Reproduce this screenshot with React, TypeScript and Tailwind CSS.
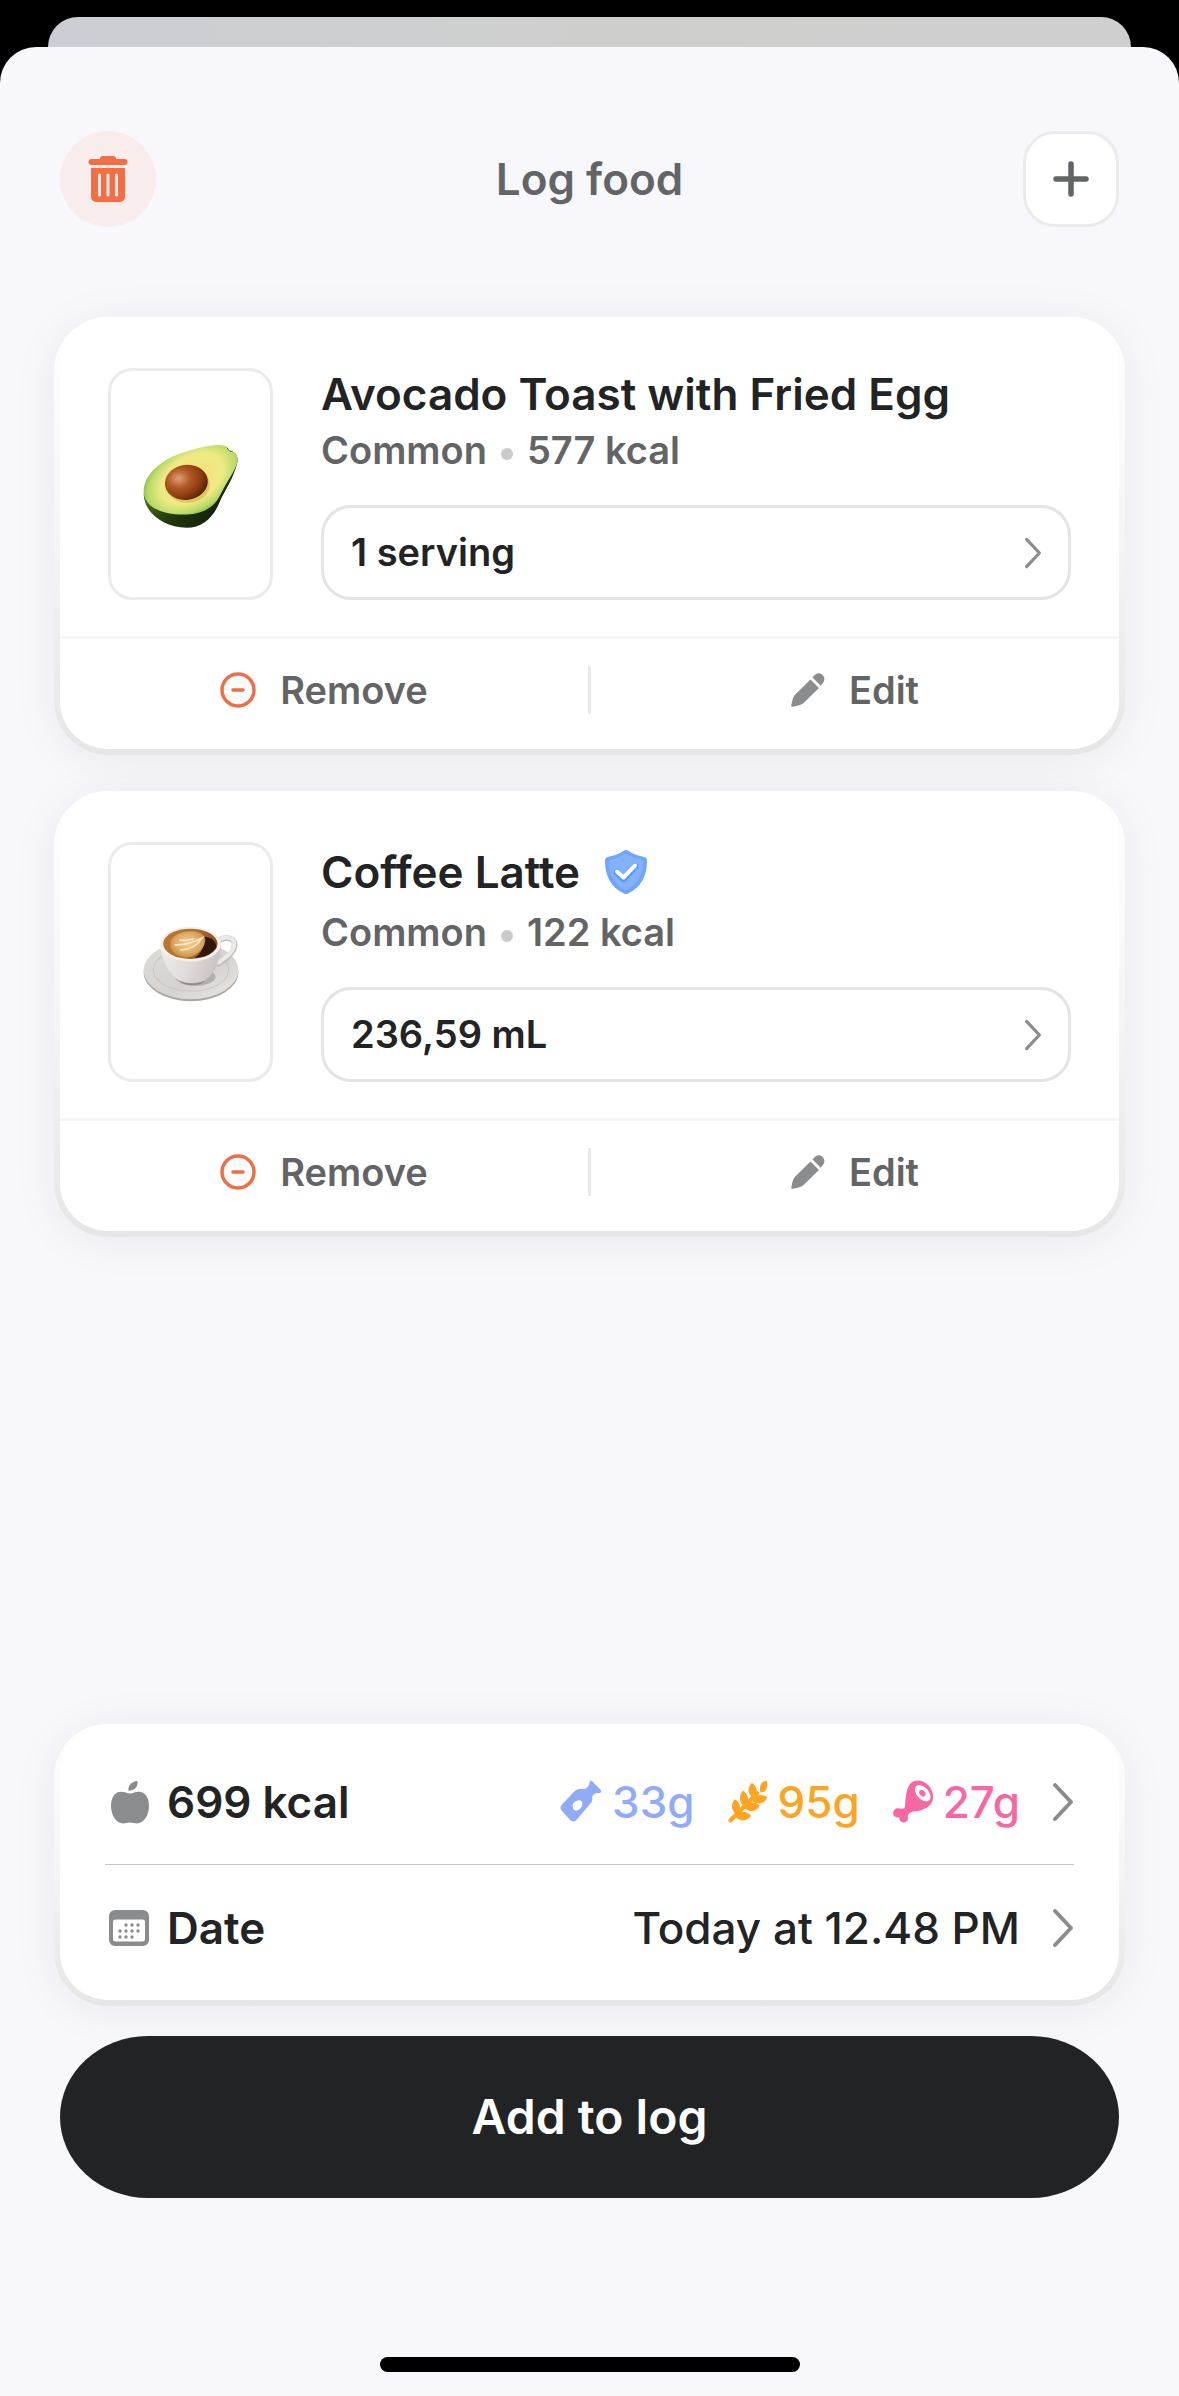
import type { ReactNode } from 'react'

type IconProps = { className?: string }

type FoodItem = {
  name: string
  source: string
  calories: string
  amount: string
  verified: boolean
  picture: ReactNode
}

function TrashIcon({ className }: IconProps) {
  return (
    <svg viewBox="0 0 40 48" className={className} fill="currentColor" aria-hidden="true">
      <path d="M12 3.500C12 2 13.200 1 14.700 1h10.600C26.800 1 28 2 28 3.500V4h8.500a3 3 0 0 1 0 6h-33a3 3 0 0 1 0-6H12z" />
      <path
        fillRule="evenodd"
        d="M3 13h34v29a5 5 0 0 1-5 5H8a5 5 0 0 1-5-5zM11.500 18.500a1.500 1.500 0 0 0-1.500 1.500v20a1.500 1.500 0 0 0 3 0V20a1.500 1.500 0 0 0-1.500-1.500zM20 18.500a1.500 1.500 0 0 0-1.500 1.500v20a1.500 1.500 0 0 0 3 0V20a1.500 1.500 0 0 0-1.500-1.500zM28.500 18.500A1.500 1.500 0 0 0 27 20v20a1.500 1.500 0 0 0 3 0V20a1.500 1.500 0 0 0-1.500-1.500z"
      />
    </svg>
  )
}

function PlusIcon({ className }: IconProps) {
  return (
    <svg viewBox="0 0 36 36" className={className} fill="none" stroke="currentColor" strokeWidth="5.500" strokeLinecap="round" aria-hidden="true">
      <path d="M18 3v30M3 18h30" />
    </svg>
  )
}

function ChevronIcon({ className }: IconProps) {
  return (
    <svg viewBox="0 0 22 40" className={className} fill="none" stroke="currentColor" strokeWidth="4" strokeLinecap="round" strokeLinejoin="round" aria-hidden="true">
      <path d="M3 3l16 17L3 37" />
    </svg>
  )
}

function MinusCircleIcon({ className }: IconProps) {
  return (
    <svg viewBox="0 0 36 36" className={className} fill="none" stroke="currentColor" strokeWidth="3.500" strokeLinecap="round" aria-hidden="true">
      <circle cx="18" cy="18" r="16" />
      <path d="M13 18h10" />
    </svg>
  )
}

function PencilIcon({ className }: IconProps) {
  return (
    <svg viewBox="0 0 34 34" className={className} fill="currentColor" aria-hidden="true">
      <path d="M19.500 6.500l8.500 8.500L12.500 30c-1.500 1.500-4 2.300-6 2.800l-4.500 1C.7 34 0 33.400.3 32.200l1-4.500c.5-2 1.200-4.500 2.700-6z" />
      <path d="M21.500 4.500l2-2.200c2.200-2.500 5.600-2.900 8.100-.4s2.300 5.900 0 8.300L29.800 12.800z" />
    </svg>
  )
}

function ShieldIcon({ className }: IconProps) {
  return (
    <svg viewBox="0 0 44 46" className={className} aria-hidden="true">
      <path d="M22 1c1 0 1.500.3 2.300.8 4 2.800 9.500 5 15 6 2.500.5 3.700 1.500 3.700 4C43 27 37 38.500 24 44.500c-1.500.7-2.500.7-4 0C7 38.500 1 27 1 11.800c0-2.500 1.200-3.500 3.700-4 5.500-1 11-3.200 15-6C20.500 1.300 21 1 22 1z" fill="#6fa6fb" />
      <path d="M22 4.500c4.500 3 10 5 15.500 6.200 1.300.3 2 .8 2 2.300C39 26 33 36 22 41.500 11 36 5 26 4.500 13c0-1.500.7-2 2-2.300C12 9.500 17.500 7.500 22 4.500z" fill="#83b2fd" />
      <path d="M13 23.500l6.500 6.500L31 17.500" fill="none" stroke="#5c97f4" strokeWidth="6.500" strokeLinecap="round" strokeLinejoin="round" />
      <path d="M13 22.500l6.500 6L31 16.500" fill="none" stroke="#fff" strokeWidth="4" strokeLinecap="round" strokeLinejoin="round" />
    </svg>
  )
}

function AppleIcon({ className }: IconProps) {
  return (
    <svg viewBox="0 0 38 44" className={className} fill="currentColor" aria-hidden="true">
      <path d="M26.500 1c1 5-2.500 9.500-9 9.800C16.500 6 20.500 1.500 26.500 1z" />
      <path d="M19 13.500c3 0 5-1.700 9-1.700 6 0 10 6 10 14 0 10-5.500 17.700-12 17.700-2.500 0-4-1-7-1s-4.500 1-7 1C5.500 43.500 0 35.800 0 25.800c0-8 4-14 10-14 4 0 6 1.700 9 1.700z" />
    </svg>
  )
}

function CalendarIcon({ className }: IconProps) {
  const dots = [
    [17, 15], [23, 15], [29, 15],
    [11, 21], [17, 21], [23, 21], [29, 21],
    [11, 27], [17, 27], [23, 27],
  ]
  return (
    <svg viewBox="0 0 40 36" className={className} fill="currentColor" aria-hidden="true">
      <path
        fillRule="evenodd"
        d="M6 0h28a6 6 0 0 1 6 6v24a6 6 0 0 1-6 6H6a6 6 0 0 1-6-6V6a6 6 0 0 1 6-6zM6.500 9.500a2.500 2.500 0 0 0-2.500 2.500v17a2.500 2.500 0 0 0 2.500 2.500h27a2.500 2.500 0 0 0 2.500-2.500V12a2.500 2.500 0 0 0-2.500-2.500z"
      />
      {dots.map(([x, y]) => (
        <circle key={`${x}-${y}`} cx={x} cy={y} r="1.700" />
      ))}
    </svg>
  )
}

function OilIcon({ className }: IconProps) {
  return (
    <svg viewBox="30 30 126 130" className={className} fill="currentColor" aria-hidden="true">
      <path
        fillRule="evenodd"
        d="M119 38c0-5 4-7 8-4l26 26c3 4 1 9-5 9-8 0-14 2-18 6-3 3-3 7-3 12 0 7-2 11-6 15l-41 48c-6 7-14 7-20 1l-25-28c-5-6-5-12 0-18l36-39c6-6 11-9 19-9h12c4 0 6-1 9-4 5-5 7-9 8-15zM84 92c-11 2-17 9-16 18 0 7 4 12 9 12 11 0 21-10 20-22-1-6-6-10-13-8z"
      />
    </svg>
  )
}

function WheatIcon({ className }: IconProps) {
  return (
    <svg viewBox="522 28 122 130" className={className} fill="currentColor" aria-hidden="true">
      <path d="M642 30c1 22 1 35-20 36-5-20 2-35 20-36z" />
      <path d="M596 36c16 10 20 30 7 48-20-11-22-32-7-48z" />
      <path d="M643 80c-8 20-28 25-45 12 8-21 28-24 45-12z" />
      <path d="M569 60c17 10 21 32 9 52-20-11-24-34-9-52z" />
      <path d="M620 106c-12 20-31 21-47 7 9-20 30-22 47-7z" />
      <path d="M544 86c18 9 22 31 11 50-20-11-25-33-11-50z" />
      <path d="M594 136c-13 19-34 18-48 3 10-21 32-19 48-3z" />
      <path d="M532 150l80-82" fill="none" stroke="currentColor" strokeWidth="13" strokeLinecap="round" />
    </svg>
  )
}

function HamIcon({ className }: IconProps) {
  return (
    <svg viewBox="1016 28 124 130" className={className} aria-hidden="true">
      <path d="M1078 33c14-7 34-4 48 11 15 16 18 39 9 54-10 15-31 24-53 25-7 1-12 3-17 10-3 5 0 9-1 14-2 8-11 12-19 8-6-3-7-8-7-14-6 1-12 0-16-5-5-8-2-19 7-22 6-2 12 0 17 1 7 0 10-5 10-13 1-28 6-60 22-69z" fill="currentColor" />
      <ellipse cx="1109" cy="68" rx="18" ry="29" transform="rotate(-42 1109 68)" fill="#fff" />
      <ellipse cx="1108" cy="68" rx="8" ry="11" transform="rotate(-42 1108 68)" fill="currentColor" />
    </svg>
  )
}

function AvocadoPicture({ className }: IconProps) {
  return (
    <svg viewBox="40 72 290 256" className={className} aria-hidden="true">
      <defs>
        <linearGradient id="skin" x1="0" y1="0.300" x2="1" y2="1">
          <stop offset="0" stopColor="#5c8a24" />
          <stop offset="0.450" stopColor="#223a0d" />
          <stop offset="1" stopColor="#0c0f0a" />
        </linearGradient>
        <radialGradient id="flesh" gradientUnits="userSpaceOnUse" cx="0" cy="0" r="1" gradientTransform="translate(188 176) rotate(-32) scale(176 112)">
          <stop offset="0" stopColor="#f3e070" />
          <stop offset="0.580" stopColor="#efea86" />
          <stop offset="0.820" stopColor="#b9da66" />
          <stop offset="1" stopColor="#76b03c" />
        </radialGradient>
        <radialGradient id="pit" cx="0.340" cy="0.360" r="0.750">
          <stop offset="0" stopColor="#dfa07c" />
          <stop offset="0.350" stopColor="#b25a28" />
          <stop offset="0.700" stopColor="#8b3a10" />
          <stop offset="1" stopColor="#4c1703" />
        </radialGradient>
      </defs>
      <path d="M42 222c0 56 60 103 130 103 46 0 78-28 98-74 18-42 42-70 55-122 3-22-6-32-24-37z" fill="url(#skin)" />
      <path d="M42 222c-2-50 36-84 78-108 46-20 92-32 134-38 20-3 36-1 42 7 3 7 6 11 13 12 14 4 20 16 16 32-6 26-34 62-52 100-18 38-54 56-100 58-66 2-122-16-131-63z" fill="url(#flesh)" />
      <path d="M294 84c5 8 9 11 15 11" fill="none" stroke="#5b8a2c" strokeWidth="3" strokeLinecap="round" />
      <ellipse cx="175" cy="194" rx="67" ry="56" fill="#cdb548" opacity="0.600" />
      <ellipse cx="171" cy="188" rx="65" ry="53" transform="rotate(-8 171 188)" fill="url(#pit)" />
    </svg>
  )
}

function LattePicture({ className }: IconProps) {
  return (
    <svg viewBox="40 76 286 226" className={className} aria-hidden="true">
      <defs>
        <linearGradient id="saucer" x1="0" y1="0" x2="1" y2="1">
          <stop offset="0" stopColor="#dedbd9" />
          <stop offset="0.600" stopColor="#d5d2d0" />
          <stop offset="1" stopColor="#ebe9e7" />
        </linearGradient>
        <linearGradient id="cup" x1="0" y1="0" x2="1" y2="0.200">
          <stop offset="0" stopColor="#efeceb" />
          <stop offset="0.500" stopColor="#e2dedc" />
          <stop offset="1" stopColor="#c9c4c1" />
        </linearGradient>
        <linearGradient id="coffee" x1="0" y1="0" x2="1" y2="0.300">
          <stop offset="0" stopColor="#bd7a33" />
          <stop offset="0.550" stopColor="#b0712f" />
          <stop offset="1" stopColor="#8a5222" />
        </linearGradient>
        <radialGradient id="foam" cx="0.500" cy="0.450" r="0.600">
          <stop offset="0" stopColor="#efcf9a" />
          <stop offset="0.600" stopColor="#e0ac66" />
          <stop offset="1" stopColor="#c4863d" />
        </radialGradient>
      </defs>
      <ellipse cx="183" cy="214" rx="141" ry="86" fill="#a9a5a2" />
      <ellipse cx="183" cy="208" rx="141" ry="86" fill="url(#saucer)" />
      <ellipse cx="183" cy="206" rx="112" ry="64" fill="none" stroke="#c8c5c2" strokeWidth="3" />
      <ellipse cx="196" cy="228" rx="60" ry="26" fill="#b3aeab" />
      <path d="M262 122c18-16 52-12 51 9-1 26-26 42-48 58" fill="none" stroke="#c4c0bd" strokeWidth="17" strokeLinecap="round" />
      <path d="M262 120c18-16 50-12 50 9-1 26-26 40-48 56" fill="none" stroke="#ebe8e6" strokeWidth="12" strokeLinecap="round" />
      <path d="M91 130c3 48 26 88 56 108 22 10 58 10 78 0 30-22 46-62 47-108z" fill="url(#cup)" />
      <path d="M147 238c22 12 58 12 78 0-14 18-64 18-78 0z" fill="#8f8883" />
      <ellipse cx="181" cy="130" rx="91" ry="52" fill="#f3f1ef" />
      <ellipse cx="181" cy="129" rx="81" ry="45" fill="url(#coffee)" />
      <path d="M222 108c20 0 38 12 36 32-10 18-36 29-64 31 20-12 30-36 28-63z" fill="#2f180a" />
      <path d="M124 118c10-18 40-28 66-26 22 2 38 14 35 30-4 26-30 48-58 48-30-2-54-26-43-52z" fill="url(#foam)" />
      <path d="M136 132c24 2 48-4 80-20-14 22-38 34-64 36M150 118c14 2 28 0 40-4" fill="none" stroke="#f8e6c2" strokeWidth="5" strokeLinecap="round" />
    </svg>
  )
}

const FOODS: FoodItem[] = [
  {
    name: 'Avocado Toast with Fried Egg',
    source: 'Common',
    calories: '577 kcal',
    amount: '1 serving',
    verified: false,
    picture: <AvocadoPicture className="w-24" />,
  },
  {
    name: 'Coffee Latte',
    source: 'Common',
    calories: '122 kcal',
    amount: '236,59 mL',
    verified: true,
    picture: <LattePicture className="w-24" />,
  },
]

// White panel with an edge that fades from white to grey and a soft glow
function Card({ children }: { children: ReactNode }) {
  return (
    <div className="rounded-[54px] bg-linear-to-b from-white via-[#f5f5f5] to-[#e6e6e7] px-1.5 pb-1.5 shadow-[0_4px_48px_rgba(20,20,30,0.06)]">
      <div className="rounded-[48px] bg-white">{children}</div>
    </div>
  )
}

function FoodCard({ food }: { food: FoodItem }) {
  return (
    <Card>
      <div className="flex gap-12 px-12 pt-[51px] pb-9">
        <div className="flex w-[165px] shrink-0 items-center justify-center rounded-3xl border-3 border-[#ebebeb] pt-1">
          {food.picture}
        </div>
        <div className="flex min-w-0 flex-1 flex-col">
          <div className="flex items-center gap-6">
            <h2 className="text-[44px] leading-[52px] font-semibold text-[#222325]">{food.name}</h2>
            {food.verified && <ShieldIcon className="h-[60px] w-11 py-1.5" />}
          </div>
          <p className="mt-2 flex items-center gap-3.5 text-[38px] leading-[45px] font-semibold text-[#636466]">
            {food.source}
            <span className="mt-1.5 size-3 rounded-full bg-[#cbcbcc]" />
            {food.calories}
          </p>
          <button
            type="button"
            className="mt-8 flex h-[95px] items-center justify-between rounded-[30px] border-3 border-[#e4e4e4] pr-[26px] pl-[27px] text-[38px] font-semibold text-[#222325]"
          >
            {food.amount}
            <ChevronIcon className="h-8 w-[18px] text-[#8b8c8e]" />
          </button>
        </div>
      </div>
      <div className="flex h-[113px] items-center border-t-3 border-[#f5f5f5] pb-2 text-[38px] font-semibold text-[#636466]">
        <button type="button" className="flex flex-1 items-center justify-center gap-6">
          <MinusCircleIcon className="size-9 text-[#ec6f48]" />
          Remove
        </button>
        <span className="h-12 w-[3px] bg-[#e8e8e8]" />
        <button type="button" className="flex flex-1 items-center justify-center gap-6">
          <PencilIcon className="size-[34px] text-[#8b8c8e]" />
          Edit
        </button>
      </div>
    </Card>
  )
}

export default function App() {
  return (
    <div className="flex min-h-screen flex-col bg-black pt-[17px] font-['Inter',sans-serif] antialiased">
      <div className="mx-12 h-[30px] rounded-t-[30px] bg-linear-to-r from-[#cdced5] via-[#cecfcd] to-[#cfcfcf]" />

      <div className="flex flex-1 flex-col rounded-t-[36px] bg-[#f8f7fc] px-[54px] pt-[84px]">
        <header className="flex items-center justify-between px-1.5">
          <button type="button" aria-label="Clear list" className="flex size-24 items-center justify-center rounded-full bg-[#f8edec] text-[#f36e45]">
            <TrashIcon className="h-12 w-10" />
          </button>
          <h1 className="text-[44px] font-semibold text-[#636468]">Log food</h1>
          <button type="button" aria-label="Add food" className="flex size-24 items-center justify-center rounded-[32px] border-3 border-[#ebebeb] bg-white text-[#636468]">
            <PlusIcon className="size-9" />
          </button>
        </header>

        <main className="flex flex-col gap-9 pt-[90px] pb-9">
          {FOODS.map((food) => (
            <FoodCard key={food.name} food={food} />
          ))}
        </main>

        <footer className="mt-auto">
          <Card>
            <div className="px-[45px] pt-[15px] pb-[9px] text-[44px] text-[#222325]">
              <button type="button" className="flex h-[126px] w-full items-center border-b border-[#c6c6c8] pl-1.5">
                <AppleIcon className="h-11 w-[38px] text-[#8b8c8e]" />
                <span className="ml-[18px] font-semibold">699 kcal</span>
                <span className="ml-auto flex items-center gap-8 font-medium">
                  <span className="flex items-center gap-2.5 text-[#91abfb]">
                    <OilIcon className="h-[43px] w-[42px]" />
                    33g
                  </span>
                  <span className="flex items-center gap-2.5 text-[#fda523]">
                    <WheatIcon className="h-[43px] w-[41px]" />
                    95g
                  </span>
                  <span className="flex items-center gap-2.5 text-[#f767a3]">
                    <HamIcon className="h-[43px] w-[41px]" />
                    27g
                  </span>
                </span>
                <ChevronIcon className="ml-8 h-10 w-[22px] text-[#8b8c8e]" />
              </button>
              <button type="button" className="flex h-[126px] w-full items-center pl-1">
                <CalendarIcon className="h-9 w-10 text-[#8b8c8e]" />
                <span className="ml-[18px] font-semibold">Date</span>
                <span className="ml-auto font-medium">Today at 12.48 PM</span>
                <ChevronIcon className="ml-8 h-10 w-[22px] text-[#8b8c8e]" />
              </button>
            </div>
          </Card>

          <div className="px-1.5 pt-[30px]">
            <button type="button" className="h-[162px] w-full rounded-[88px/81px] bg-[#222325] text-[48px] font-semibold text-white">
              Add to log
            </button>
          </div>

          <div className="mx-auto mt-[159px] mb-6 h-[15px] w-[420px] rounded-full bg-black" />
        </footer>
      </div>
    </div>
  )
}
